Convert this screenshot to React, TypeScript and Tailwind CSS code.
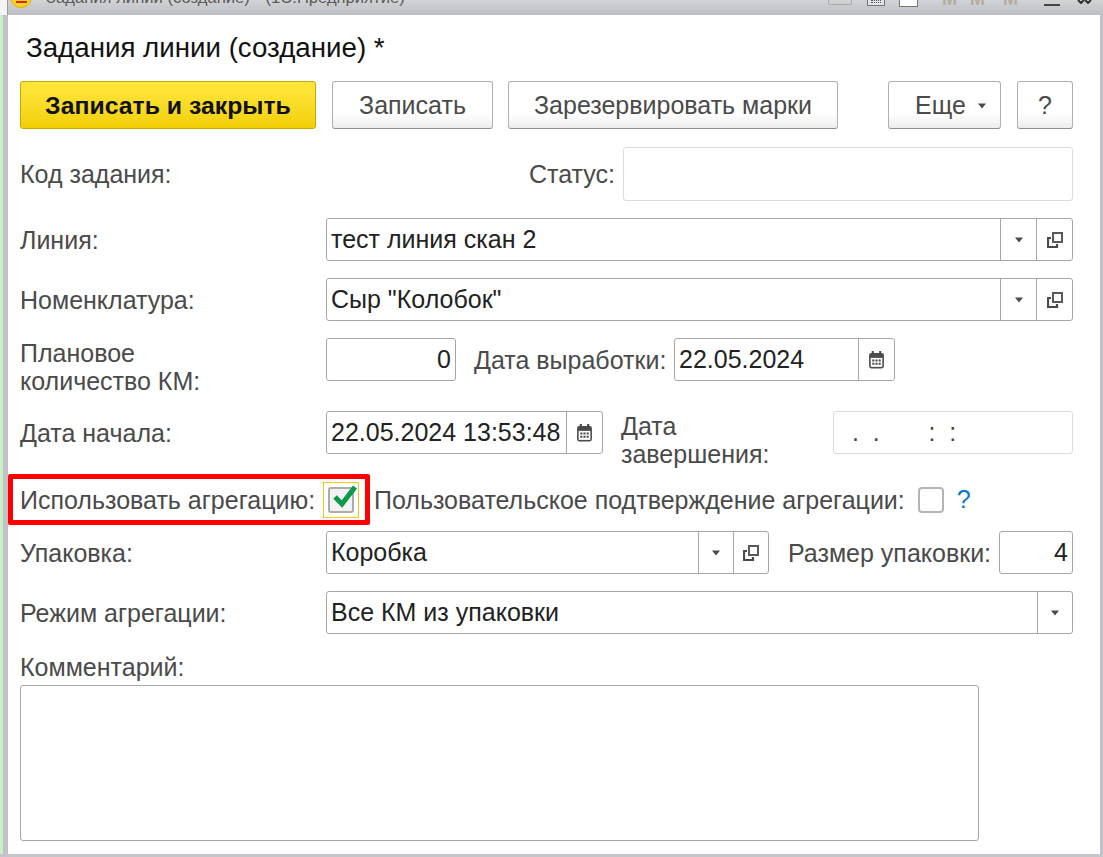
import React from "react";

const Caret = () => (
  <svg width="10" height="6" viewBox="0 0 10 6"><path d="M1 0.5h8L5 5.5z" fill="#4a4a4a" /></svg>
);

const Copy = () => (
  <svg width="16" height="16" viewBox="0 0 16 16" fill="none" stroke="#4a4a4a" strokeWidth="2">
    <rect x="6" y="1" width="9" height="9" stroke="#5a5a5a" />
    <path d="M4 6H1v9h9v-3" strokeWidth="2.2" />
  </svg>
);

const Calendar = () => (
  <svg width="17" height="18" viewBox="0.5 0.5 15 17">
    <path d="M1 4.5a2 2 0 0 1 2-2h10a2 2 0 0 1 2 2V15a2 2 0 0 1-2 2H3a2 2 0 0 1-2-2z" fill="#4a4a4a" />
    <rect x="3.5" y="0.5" width="2" height="3" fill="#4a4a4a" />
    <rect x="10.5" y="0.5" width="2" height="3" fill="#4a4a4a" />
    <rect x="2.5" y="7" width="11" height="8.5" fill="#fff" />
    <path d="M4 8.5h2v2H4zM7 8.5h2v2H7zM10 8.5h2v2h-2zM4 11.5h2v2H4zM7 11.5h2v2H7zM10 11.5h2v2h-2z" fill="#4a4a4a" />
  </svg>
);

function Btn({ className, children }: { className: string; children: React.ReactNode }) {
  return (
    <div className={`h-[48px] flex items-center justify-center rounded-[3px] border border-[#b0b0b0] border-b-[#8f8f8f] bg-gradient-to-b from-white from-70% to-[#ececec] text-[#4a4a4a] text-[25px] pt-[1px] ${className}`}>
      {children}
    </div>
  );
}

function Field({
  className,
  value,
  right,
  children,
}: {
  className: string;
  value?: string;
  right?: boolean;
  children?: React.ReactNode;
}) {
  return (
    <div className={`h-[43px] flex items-stretch rounded-[3px] border border-[#a6a6a6] bg-white ${className}`}>
      <div className={`flex-1 min-w-0 flex items-center px-1 text-[25px] text-[#222] whitespace-nowrap ${right ? "justify-end" : ""}`}>
        {value}
      </div>
      {children}
    </div>
  );
}

const Side = ({ w, children }: { w: string; children: React.ReactNode }) => (
  <div className={`${w} flex items-center justify-center border-l border-[#a6a6a6]`}>{children}</div>
);

const Label = ({ className = "", children }: { className?: string; children: React.ReactNode }) => (
  <div className={`text-[25px] text-[#4a4a4a] leading-[28px] ${className}`}>{children}</div>
);

export default function App() {
  return (
    <div
      className="relative w-[1103px] h-[857px] overflow-hidden flex flex-col bg-[#c4c6cb]"
      style={{ fontFamily: '"Liberation Sans", Arial, sans-serif' }}
    >
      <div className="h-[15px] shrink-0 flex items-start bg-gradient-to-b from-[#d2d3d6] to-[#bcbec3] overflow-hidden">
        <div className="w-[8px] h-[15px] bg-[#f4f4f4] border-r border-[#9a9a9a]" />
        <div className="relative w-[22px] h-[22px] -mt-[14px] ml-[2px] rounded-full bg-[#f7d328] border border-[#e8b000]">
          <div className="absolute left-[5px] top-[14px] w-[11px] h-[2px] bg-[#d8281e]" />
          <div className="absolute left-[5px] top-[11px] w-[11px] h-[2px] bg-[#d8281e]" />
        </div>
        <div className="ml-[14px] -mt-[12px] text-[#5a5a5a] text-[16.6px] leading-[20px] whitespace-nowrap">
          Задания линии (создание) * (1С:Предприятие)
        </div>
        <div className="absolute left-[828px] top-0 w-[24px] h-[5px] border border-t-0 border-[#a9a9a9] rounded-b-[2px]" />
        <div className="absolute left-[867px] top-0 w-[18px] h-[6px] border border-t-0 border-[#777] bg-[#dfe3ea] flex justify-center">
          <div className="w-[10px] h-[3px] border-t border-b border-dotted border-[#555]" />
        </div>
        <div className="absolute left-[899px] top-0 w-[19px] h-[7px] border border-t-0 border-[#777] bg-white" />
        <div className="absolute left-[942px] -top-[9px] font-bold text-[18px] leading-[16px] text-[#b5aca0]">M</div>
        <div className="absolute left-[970px] -top-[9px] font-bold text-[18px] leading-[16px] text-[#b5aca0]">M</div>
        <div className="absolute left-[1003px] -top-[9px] font-bold text-[18px] leading-[16px] text-[#b5aca0]">M</div>
        <div className="absolute left-[1044px] top-0 w-[16px] h-[6px] border-b-2 border-[#444] bg-[#d0d0d0]" />
        <div className="absolute left-[1077px] top-0 w-[15px] h-[4px]">
          <svg width="15" height="4" viewBox="0 0 15 4"><path d="M1 0l3 3 3-3M8 0l3 3 3-3" stroke="#333" strokeWidth="2" fill="none" /></svg>
        </div>
      </div>
      <div className="flex-1 flex min-h-0 pb-[3px]">
        <div className="w-[3px] bg-[#c9efc4]" />
        <div className="w-[5px] bg-[#c0c2c7]" />
        <div className="flex-1 min-w-0 bg-white flex flex-col pl-[12px] pr-[27px]">
          <div className="h-[66px] shrink-0 flex items-center pl-[6px] text-[27.7px] text-[#111]">
            Задания линии (создание) *
          </div>
          <div className="h-[48px] shrink-0 flex">
            <Btn className="w-[296px] font-bold !text-[24.8px] !text-[#111] !border-[#c9a800] !from-[#ffe83a] !from-0% !to-[#f2cf00]">
              Записать и закрыть
            </Btn>
            <Btn className="ml-[16px] w-[161px]">Записать</Btn>
            <Btn className="ml-[15px] w-[330px]">Зарезервировать марки</Btn>
            <Btn className="ml-[50px] w-[113px] gap-[11px] pl-[13px]">
              Еще <Caret />
            </Btn>
            <Btn className="ml-[16px] w-[56px]">?</Btn>
          </div>

          <div className="mt-[18px] h-[54px] shrink-0 flex items-center">
            <Label className="w-[509px]">Код задания:</Label>
            <Label className="w-[94px]">Статус:</Label>
            <div className="w-[450px] h-[54px] rounded-[3px] border border-[#dcdcdc]" />
          </div>

          <div className="mt-[17px] h-[43px] shrink-0 flex items-center">
            <Label className="w-[306px]">Линия:</Label>
            <Field className="w-[747px]" value="тест линия скан 2">
              <Side w="w-[36px]"><Caret /></Side>
              <Side w="w-[36px]"><Copy /></Side>
            </Field>
          </div>

          <div className="mt-[17px] h-[43px] shrink-0 flex items-center">
            <Label className="w-[306px]">Номенклатура:</Label>
            <Field className="w-[747px]" value={'Сыр "Колобок"'}>
              <Side w="w-[36px]"><Caret /></Side>
              <Side w="w-[36px]"><Copy /></Side>
            </Field>
          </div>

          <div className="mt-[17px] h-[43px] shrink-0 flex items-center">
            <Label className="w-[306px] mt-[14px]">
              Плановое
              <br />
              количество КМ:
            </Label>
            <Field className="w-[130px]" value="0" right />
            <Label className="ml-[18px] w-[200px]">Дата выработки:</Label>
            <Field className="w-[221px]" value="22.05.2024">
              <Side w="w-[36px]"><Calendar /></Side>
            </Field>
          </div>

          <div className="mt-[30px] h-[43px] shrink-0 flex items-center">
            <Label className="w-[306px]">Дата начала:</Label>
            <Field className="w-[277px]" value="22.05.2024 13:53:48">
              <Side w="w-[36px]"><Calendar /></Side>
            </Field>
            <Label className="ml-[18px] w-[212px] mt-[14px]">
              Дата
              <br />
              завершения:
            </Label>
            <div className="w-[240px] h-[43px] rounded-[3px] border border-[#dcdcdc] flex items-center pl-[18px] text-[25px] text-[#444] whitespace-pre">
              {".  .       :  :"}
            </div>
          </div>

          <div className="mt-[20px] h-[51px] shrink-0 flex items-center -ml-[12px]">
            <div className="w-[362px] h-[51px] shrink-0 border-[5px] border-[#ff0000] rounded-[2px] flex items-center pl-[7px]">
              <Label className="whitespace-nowrap">Использовать агрегацию:</Label>
              <div className="ml-[8px] w-[36px] h-[36px] shrink-0 border border-[#f5c518] flex items-center justify-center">
                <div className="relative w-[26px] h-[26px] rounded-[3px] border-2 border-[#ababab] bg-[#f2f2f2]">
                  <svg className="absolute -top-[5px] left-[3px]" width="24" height="24" viewBox="0 0 24 24" fill="none">
                    <path d="M2 13l7 7L22 3" stroke="#0a9a48" strokeWidth="5" />
                  </svg>
                </div>
              </div>
            </div>
            <Label className="ml-[4px] whitespace-nowrap">Пользовательское подтверждение агрегации:</Label>
            <div className="ml-[13px] w-[26px] h-[26px] rounded-[4px] border-2 border-[#b5b5b5]" />
            <div className="ml-[13px] text-[25px] text-[#0a78c8]">?</div>
          </div>

          <div className="mt-[6px] h-[43px] shrink-0 flex items-center">
            <Label className="w-[306px]">Упаковка:</Label>
            <Field className="w-[443px]" value="Коробка">
              <Side w="w-[35px]"><Caret /></Side>
              <Side w="w-[35px]"><Copy /></Side>
            </Field>
            <Label className="ml-[19px] w-[211px] whitespace-nowrap">Размер упаковки:</Label>
            <Field className="w-[74px]" value="4" right />
          </div>

          <div className="mt-[17px] h-[43px] shrink-0 flex items-center">
            <Label className="w-[306px]">Режим агрегации:</Label>
            <Field className="w-[747px]" value="Все КМ из упаковки">
              <Side w="w-[35px]"><Caret /></Side>
            </Field>
          </div>

          <Label className="mt-[19px] h-[32px] shrink-0">Комментарий:</Label>
          <div className="h-[156px] w-[959px] shrink-0 rounded-[3px] border border-[#a6a6a6]" />
        </div>
        <div className="w-[3px] bg-[#c0c2c7]" />
      </div>
    </div>
  );
}
